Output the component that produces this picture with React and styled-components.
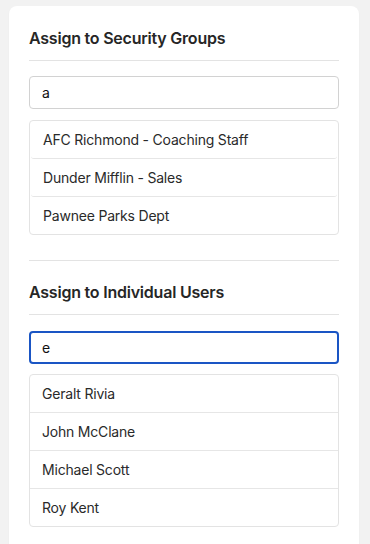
import styled, { createGlobalStyle } from "styled-components";

const GlobalStyle = createGlobalStyle`
  body {
    margin: 0;
    background: #f2f2f2;
    font-family: Inter, "Noto Sans", "Liberation Sans", sans-serif;
    color: #222;
  }
`;

const Page = styled.div`
  box-sizing: border-box;
  height: 100vh;
  overflow: hidden;
  padding: 6px 11px 0 9px;
`;

const Card = styled.div`
  background: #fff;
  border-radius: 8px;
  box-shadow: 0 1px 2px rgba(0, 0, 0, 0.04);
  padding: 20px;
  min-height: 100%;
`;

const Section = styled.section`
  & + & {
    margin-top: 25px;
    border-top: 1px solid #e3e3e3;
    padding-top: 19px;
  }
`;

const Heading = styled.h3`
  margin: 0;
  font-size: 16px;
  font-weight: 600;
  line-height: 24px;
  letter-spacing: -0.22px;
  color: #262626;
  padding-bottom: 10px;
  border-bottom: 1px solid #e3e3e3;
`;

const Search = styled.input`
  display: block;
  box-sizing: border-box;
  width: 100%;
  height: 33px;
  margin-top: ${p => (p.$focused ? "16px" : "15px")};
  padding: 0 12px;
  padding-left: ${p => (p.$focused ? "11px" : "12px")};
  font-family: inherit;
  font-size: 14px;
  color: #111;
  background: #fff;
  border: ${p => (p.$focused ? "2px solid #1a55c4" : "1px solid #d2d2d2")};
  border-radius: 4px;
  outline: none;
`;

const List = styled.ul`
  list-style: none;
  margin: ${p => (p.$tight ? "10px" : "11px")} 0 0;
  padding: 0;
  border: 1px solid #e3e3e3;
  border-radius: 4px;
`;

const Item = styled.li`
  height: 37px;
  display: flex;
  align-items: center;
  padding: 0 12px;
  font-size: 14px;
  letter-spacing: -0.2px;
  color: #2a2a2a;
  border-bottom: 1px solid #e6e6e6;
  margin: ${p => (p.$inset ? "0 1px" : "0")};
  border-radius: ${p => (p.$inset ? "0 0 3px 3px" : "0")};
  &:last-child {
    border-bottom: none;
  }
`;

const groups = ["AFC Richmond - Coaching Staff", "Dunder Mifflin - Sales", "Pawnee Parks Dept"];
const users = ["Geralt Rivia", "John McClane", "Michael Scott", "Roy Kent"];

export default function App() {
  return (
    <>
      <GlobalStyle />
      <Page>
        <Card>
          <Section>
            <Heading>Assign to Security Groups</Heading>
            <Search defaultValue="a" />
            <List>
              {groups.map(g => (
                <Item key={g} $inset>{g}</Item>
              ))}
            </List>
          </Section>
          <Section>
            <Heading>Assign to Individual Users</Heading>
            <Search defaultValue="e" $focused autoFocus />
            <List $tight>
              {users.map(u => (
                <Item key={u}>{u}</Item>
              ))}
            </List>
          </Section>
        </Card>
      </Page>
    </>
  );
}
